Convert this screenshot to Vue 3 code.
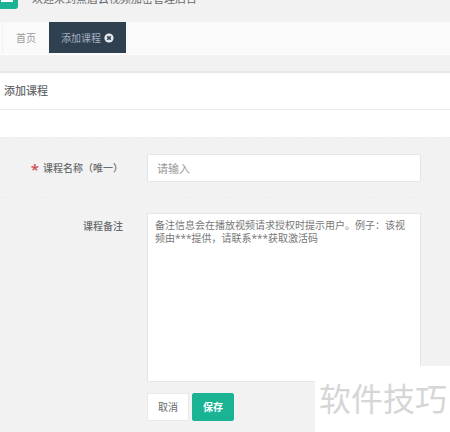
<script setup>
import { ref } from 'vue'

const courseName = ref('')
const remark = ref('')
</script>

<template>
  <div class="page">
    <header class="topbar">
      <button class="menu" type="button" aria-label="菜单">
        <svg viewBox="0 0 12 12" width="12" height="12" aria-hidden="true">
          <path d="M0 2h12M0 6h12M0 10h12" stroke="#fff" stroke-width="2" />
        </svg>
      </button>
      <span class="welcome">欢迎来到点盾云视频加密管理后台</span>
    </header>

    <nav class="tabs">
      <a class="tab" href="#home">首页</a>
      <a class="tab active" href="#add">
        <span>添加课程</span>
        <svg viewBox="0 0 10 10" width="10" height="10" aria-hidden="true">
          <circle cx="5" cy="5" r="4.6" fill="#e6eaee" />
          <path d="M3.2 3.2l3.6 3.6M6.8 3.2l-3.6 3.6" stroke="#2f4050" stroke-width="1.6" />
        </svg>
      </a>
    </nav>

    <main class="panel">
      <h1 class="title">添加课程</h1>
      <div class="spacer"></div>
      <form class="form" @submit.prevent>
        <div class="row first">
          <label class="label" for="name"><b class="star">*</b>课程名称（唯一）</label>
          <input id="name" v-model="courseName" class="field" type="text" placeholder="请输入" />
        </div>
        <div class="row second">
          <label class="label" for="remark">课程备注</label>
          <textarea
            id="remark"
            v-model="remark"
            class="field area"
            placeholder="备注信息会在播放视频请求授权时提示用户。例子：该视频由***提供，请联系***获取激活码"
          ></textarea>
        </div>
        <div class="actions">
          <button class="btn" type="button">取消</button>
          <button class="btn primary" type="submit">保存</button>
        </div>
      </form>
    </main>

    <div class="mark">软件技巧</div>
  </div>
</template>

<style>
body {
  background: #f2f2f2;
}
</style>

<style scoped>
.page {
  position: relative;
  min-height: 100vh;
  overflow: hidden;
  box-sizing: border-box;
  font-family: "Open Sans", "Noto Sans CJK SC", sans-serif;
  font-size: 11px;
  color: #676a6c;
}

.page * {
  box-sizing: border-box;
}

.topbar {
  display: flex;
  align-items: flex-end;
  gap: 14px;
  height: 22px;
  padding-bottom: 13px;
  overflow: hidden;
}

.menu {
  flex: none;
  display: flex;
  align-items: center;
  justify-content: center;
  width: 18px;
  height: 24px;
  padding: 0 5px 0 0;
  border: 0;
  border-radius: 0 0 3px 0;
  background: #1ab394;
}

.welcome {
  line-height: 20px;
}

.tabs {
  display: flex;
  height: 33px;
  padding: 0 0 1px 2px;
  background: #fafafa;
  border-bottom: 1px solid #fff;
}

.tab {
  display: flex;
  align-items: center;
  gap: 3px;
  padding: 0 13px;
  border-left: 1px solid #f0f0f0;
  font-size: 10px;
  line-height: 16px;
  color: #999;
  text-decoration: none;
}

.tab.active {
  padding: 0 12px;
  border: 0;
  background: #2f4050;
  color: #a7b1c2;
}

.panel {
  margin-top: 16px;
  border-top: 2px solid #e7e8e9;
}

.title {
  margin: 0;
  padding: 0 4px;
  background: #fff;
  border-bottom: 1px solid #e9ebec;
  font-size: 11px;
  font-weight: 500;
  line-height: 36px;
}

.spacer {
  height: 27px;
  background: #fff;
}

.form {
  padding: 0 29px 12px 0;
  border-top: 1px dashed #ececec;
}

.row {
  display: flex;
}

.first {
  padding: 16px 0 15px;
}

.second {
  padding-top: 15px;
  border-top: 1px dashed #eee;
}

.label {
  flex: none;
  width: 147px;
  padding-right: 24px;
  font-size: 10px;
  font-weight: 500;
  line-height: 28px;
  text-align: right;
  white-space: nowrap;
}

.star {
  margin-right: 4px;
  font-size: 15px;
  font-weight: 600;
  line-height: 16px;
  vertical-align: middle;
  color: #cf4a50;
}

.field {
  flex: 1;
  min-width: 0;
  height: 28px;
  padding: 0 9px;
  border: 1px solid #e5e6e7;
  border-radius: 1px;
  outline: none;
  background: #fff;
  font-family: inherit;
  font-size: 11px;
  color: #676a6c;
}

.field::placeholder {
  color: #999;
  opacity: 1;
}

.area {
  height: 169px;
  padding: 5px 7px;
  font-size: 10px;
  line-height: 13px;
  resize: none;
}

.area::placeholder {
  color: #777;
}

.second .label {
  line-height: 26px;
}

.actions {
  display: flex;
  gap: 3px;
  padding: 11px 0 0 147px;
}

.btn {
  height: 28px;
  padding: 0 10px;
  border: 1px solid #e7eaec;
  border-radius: 2px;
  background: #fff;
  font-family: inherit;
  font-size: 10px;
  line-height: 16px;
  color: #676a6c;
}

.btn.primary {
  border-color: #1ab394;
  background: #1ab394;
  font-weight: 700;
  color: #fff;
}

/* Corner mark laid over the page */
.mark {
  position: absolute;
  right: 0;
  bottom: 0;
  padding: 0 3px 4px 4px;
  background: #fff;
  font-family: "Noto Sans CJK SC", sans-serif;
  font-size: 32px;
  font-weight: 400;
  line-height: 63px;
  color: #d6d6d6;
}
</style>
